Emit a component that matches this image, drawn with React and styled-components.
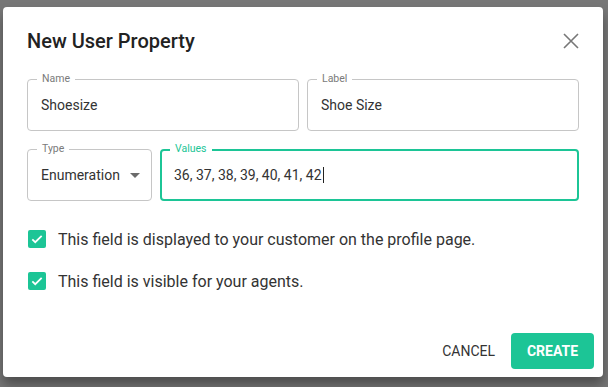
import React from 'react';
import styled, { createGlobalStyle } from 'styled-components';

const GlobalStyle = createGlobalStyle`
  html, body {
    margin: 0;
    padding: 0;
    width: 608px;
    height: 387px;
    overflow: hidden;
    font-family: Roboto, "Liberation Sans", sans-serif;
  }
`;

const Backdrop = styled.div`
  width: 608px;
  height: 387px;
  background: #777777;
  padding: 7px 0 0 3px;
  box-sizing: border-box;
`;

const Dialog = styled.div`
  width: 600px;
  height: 370px;
  background: #fff;
  border-radius: 4px;
  box-shadow: 0 8px 12px rgba(0, 0, 0, 0.35);
  display: flex;
  flex-direction: column;
  box-sizing: border-box;
`;

const Header = styled.div`
  display: flex;
  align-items: center;
  justify-content: space-between;
  padding: 20px 22px 0 24px;
  height: 27px;
`;

const Title = styled.h2`
  margin: 0;
  font-size: 20px;
  line-height: 24px;
  font-weight: 500;
  color: #222;
`;

const CloseBtn = styled.button`
  border: 0;
  background: none;
  padding: 0;
  width: 20px;
  height: 20px;
  display: flex;
  align-items: center;
  justify-content: center;
  cursor: pointer;
`;

const Body = styled.div`
  padding: 25px 24px 0 24px;
  display: flex;
  flex-direction: column;
`;

const Row = styled.div`
  display: grid;
  grid-template-columns: ${p => p.$cols};
  gap: 8px;
  margin-bottom: ${p => p.$mb || 0}px;
`;

const Field = styled.div`
  position: relative;
  height: 52px;
  box-sizing: border-box;
  border: ${p => (p.$focused ? '2px solid #1cc596' : '1px solid #c6c6c6')};
  border-radius: 4px;
  display: flex;
  align-items: center;
  padding: 0 ${p => (p.$focused ? 12 : 13)}px;
`;

const FieldLabel = styled.span`
  position: absolute;
  top: ${p => (p.$focused ? -8 : -7)}px;
  left: ${p => (p.$focused ? 8 : 9)}px;
  padding: 0 5px;
  background: #fff;
  font-size: 10.5px;
  line-height: 12px;
  color: ${p => (p.$focused ? '#1cc596' : '#7a7a7a')};
`;

const FieldValue = styled.span`
  font-size: 14px;
  color: #333;
  display: flex;
  align-items: center;
`;

const Caret = styled.span`
  display: inline-block;
  width: 1px;
  height: 16px;
  background: #222;
  margin-left: 1px;
`;

const Arrow = styled.span`
  width: 0;
  height: 0;
  border-left: 5px solid transparent;
  border-right: 5px solid transparent;
  border-top: 5px solid #6b6b6b;
  margin-left: 10px;
`;

const Checks = styled.div`
  display: flex;
  flex-direction: column;
  gap: 24px;
  margin-top: 29px;
  padding-left: 1px;
`;

const CheckRow = styled.label`
  display: flex;
  align-items: center;
  gap: 12px;
  font-size: 16px;
  color: #333;
  height: 18px;
`;

const Box = styled.span`
  width: 18px;
  height: 18px;
  border-radius: 2px;
  background: #1cc596;
  display: flex;
  align-items: center;
  justify-content: center;
`;

const Actions = styled.div`
  margin-top: auto;
  display: flex;
  justify-content: flex-end;
  align-items: center;
  gap: 16px;
  padding: 0 9px 8px 0;
`;

const TextButton = styled.button`
  border: 0;
  background: none;
  font-family: inherit;
  font-size: 14px;
  font-weight: 400;
  color: #333;
  padding: 0;
`;

const PrimaryButton = styled.button`
  border: 0;
  background: #1cc596;
  color: #fff;
  font-family: inherit;
  font-size: 14px;
  font-weight: 700;
  width: 83px;
  height: 36px;
  border-radius: 4px;
`;

const Check = () => (
  <svg width="14" height="14" viewBox="0 0 24 24">
    <path d="M4 12.5l5 5L20 6.5" fill="none" stroke="#fff" strokeWidth="3" />
  </svg>
);

export default function App() {
  return (
    <>
      <GlobalStyle />
      <Backdrop>
        <Dialog>
          <Header>
            <Title>New User Property</Title>
            <CloseBtn>
              <svg width="16" height="16" viewBox="0 0 16 16">
                <path d="M1 1L15 15M15 1L1 15" stroke="#777" strokeWidth="1.6" />
              </svg>
            </CloseBtn>
          </Header>
          <Body>
            <Row $cols="1fr 1fr" $mb={18}>
              <Field>
                <FieldLabel>Name</FieldLabel>
                <FieldValue>Shoesize</FieldValue>
              </Field>
              <Field>
                <FieldLabel>Label</FieldLabel>
                <FieldValue>Shoe Size</FieldValue>
              </Field>
            </Row>
            <Row $cols="125px 1fr">
              <Field>
                <FieldLabel>Type</FieldLabel>
                <FieldValue>
                  Enumeration
                  <Arrow />
                </FieldValue>
              </Field>
              <Field $focused>
                <FieldLabel $focused>Values</FieldLabel>
                <FieldValue>
                  36, 37, 38, 39, 40, 41, 42
                  <Caret />
                </FieldValue>
              </Field>
            </Row>
            <Checks>
              <CheckRow>
                <Box><Check /></Box>
                This field is displayed to your customer on the profile page.
              </CheckRow>
              <CheckRow>
                <Box><Check /></Box>
                This field is visible for your agents.
              </CheckRow>
            </Checks>
          </Body>
          <Actions>
            <TextButton>CANCEL</TextButton>
            <PrimaryButton>CREATE</PrimaryButton>
          </Actions>
        </Dialog>
      </Backdrop>
    </>
  );
}
